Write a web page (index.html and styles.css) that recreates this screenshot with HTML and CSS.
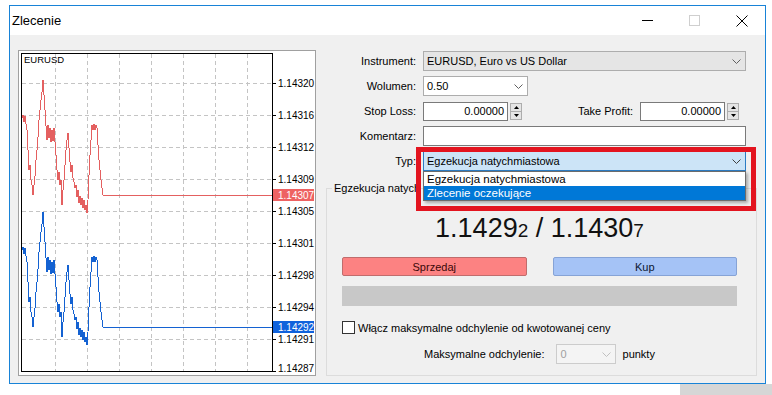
FILE: index.html
```html
<!DOCTYPE html>
<html>
<head>
    <meta charset="utf-8">
    <title>Zlecenie</title>
    <link rel="stylesheet" href="styles.css">
</head>
<body>
    <div class="okno">
        <div class="pasek">
            <span class="tytul">Zlecenie</span>
            <div class="przyciski">
                <span class="ctl"><svg width="11" height="1"><line x1="0" y1="0.5" x2="11" y2="0.5" stroke="#000"/></svg></span>
                <span class="ctl"><svg width="11" height="11"><rect x="0.5" y="0.5" width="10" height="10" fill="none" stroke="#cfcfcf"/></svg></span>
                <span class="ctl"><svg width="12" height="12"><path d="M0.5 0.5 L11.5 11.5 M11.5 0.5 L0.5 11.5" stroke="#000" fill="none"/></svg></span>
            </div>
        </div>

        <div class="klient">
            <div class="wykres">
                <svg width="296" height="324" viewBox="19 51 296 324">
                    <defs>
                        <polyline id="linia" fill="none" points="22,118 23,115 24,122 25,116 26,124 27,130 28,150 29,170 30,165 31,180 32,185 33,195 34,185 35,176 36,160 37,150 38,137 39,120 40,110 41,100 42,92 43,80 44,95 45,110 46,126 47,140 48,125 49,138 50,128 51,142 52,130 53,141 54,128 55,142 56,155 57,170 58,180 59,172 60,185 61,180 62,205 63,190 64,180 65,165 66,150 67,140 68,133 69,148 70,162 71,172 72,165 73,178 74,182 75,188 76,185 77,197 78,190 79,203 80,196 81,205 82,198 83,208 84,200 85,210 86,205 87,213 88,200 89,175 90,155 91,140 92,125 93,130 94,124 95,130 96,125 97,128 98,145 99,160 100,170 101,180 102,188 103,195 273,195"/>
                    </defs>
                    <g stroke="#c4c4c4" stroke-dasharray="4,3" shape-rendering="crispEdges">
                        <line x1="55.5" y1="54" x2="55.5" y2="371"/>
                        <line x1="87.5" y1="54" x2="87.5" y2="371"/>
                        <line x1="119.5" y1="54" x2="119.5" y2="371"/>
                        <line x1="151.5" y1="54" x2="151.5" y2="371"/>
                        <line x1="183.5" y1="54" x2="183.5" y2="371"/>
                        <line x1="215.5" y1="54" x2="215.5" y2="371"/>
                        <line x1="247.5" y1="54" x2="247.5" y2="371"/>
                        <line x1="22" y1="83.5" x2="272" y2="83.5"/>
                        <line x1="22" y1="115.5" x2="272" y2="115.5"/>
                        <line x1="22" y1="147.5" x2="272" y2="147.5"/>
                        <line x1="22" y1="179.5" x2="272" y2="179.5"/>
                        <line x1="22" y1="211.5" x2="272" y2="211.5"/>
                        <line x1="22" y1="243.5" x2="272" y2="243.5"/>
                        <line x1="22" y1="275.5" x2="272" y2="275.5"/>
                        <line x1="22" y1="307.5" x2="272" y2="307.5"/>
                        <line x1="22" y1="339.5" x2="272" y2="339.5"/>
                    </g>
                    <use href="#linia" stroke="#e46060" shape-rendering="crispEdges"/>
                    <use href="#linia" stroke="#1462d2" shape-rendering="crispEdges" transform="translate(0,132)"/>
                    <rect x="21.5" y="53.5" width="251" height="318" fill="none" stroke="#000" shape-rendering="crispEdges"/>
                    <g stroke="#000" shape-rendering="crispEdges">
                        <line x1="273" y1="83.5" x2="276" y2="83.5"/>
                        <line x1="273" y1="115.5" x2="276" y2="115.5"/>
                        <line x1="273" y1="147.5" x2="276" y2="147.5"/>
                        <line x1="273" y1="179.5" x2="276" y2="179.5"/>
                        <line x1="273" y1="211.5" x2="276" y2="211.5"/>
                        <line x1="273" y1="243.5" x2="276" y2="243.5"/>
                        <line x1="273" y1="275.5" x2="276" y2="275.5"/>
                        <line x1="273" y1="307.5" x2="276" y2="307.5"/>
                        <line x1="273" y1="339.5" x2="276" y2="339.5"/>
                        <line x1="273" y1="371.5" x2="276" y2="371.5"/>
                    </g>
                    <g class="skala">
                        <text x="278" y="87">1.14320</text>
                        <text x="278" y="119">1.14316</text>
                        <text x="278" y="151">1.14312</text>
                        <text x="278" y="183">1.14309</text>
                        <text x="278" y="215">1.14305</text>
                        <text x="278" y="247">1.14301</text>
                        <text x="278" y="279">1.14298</text>
                        <text x="278" y="311">1.14294</text>
                        <text x="278" y="343">1.14291</text>
                        <text x="278" y="372">1.14287</text>
                    </g>
                    <rect x="273" y="189" width="41" height="12" fill="#ee6262"/>
                    <text class="skala biala" x="278" y="198.5">1.14307</text>
                    <rect x="273" y="321" width="41" height="12" fill="#0f62dc"/>
                    <text class="skala biala" x="278" y="330.5">1.14292</text>
                    <text class="symbol" x="24" y="63">EURUSD</text>
                </svg>
            </div>

            <div class="zlecenie">
                <div class="formularz">
                    <span class="etykieta">Instrument:</span>
                    <div class="pole combo szare">
                        <span class="wartosc">EURUSD, Euro vs US Dollar</span>
                        <span class="strzalka"><svg width="9" height="5"><polyline points="0.5,0.5 4.5,4.5 8.5,0.5" fill="none" stroke="#606060"/></svg></span>
                    </div>

                    <span class="etykieta">Wolumen:</span>
                    <div class="pole combo waskie">
                        <span class="wartosc">0.50</span>
                        <span class="strzalka"><svg width="9" height="5"><polyline points="0.5,0.5 4.5,4.5 8.5,0.5" fill="none" stroke="#606060"/></svg></span>
                    </div>

                    <span class="etykieta">Stop Loss:</span>
                    <div class="sltp">
                        <div class="liczba">
                            <span class="edycja">0.00000</span>
                            <span class="spin">
                                <span><svg width="5" height="3"><polygon points="0,3 2.5,0 5,3" fill="#000"/></svg></span>
                                <span><svg width="5" height="3"><polygon points="0,0 2.5,3 5,0" fill="#000"/></svg></span>
                            </span>
                        </div>
                        <span class="etykieta-tp">Take Profit:</span>
                        <div class="liczba">
                            <span class="edycja">0.00000</span>
                            <span class="spin">
                                <span><svg width="5" height="3"><polygon points="0,3 2.5,0 5,3" fill="#000"/></svg></span>
                                <span><svg width="5" height="3"><polygon points="0,0 2.5,3 5,0" fill="#000"/></svg></span>
                            </span>
                        </div>
                    </div>

                    <span class="etykieta">Komentarz:</span>
                    <div class="pole"></div>

                    <span class="etykieta">Typ:</span>
                    <div class="pole combo aktywne">
                        <span class="wartosc">Egzekucja natychmiastowa</span>
                        <span class="strzalka"><svg width="9" height="5"><polyline points="0.5,0.5 4.5,4.5 8.5,0.5" fill="none" stroke="#404040"/></svg></span>
                        <ul class="lista">
                            <li>Egzekucja natychmiastowa</li>
                            <li class="wybrane">Zlecenie oczekujące</li>
                        </ul>
                    </div>
                </div>

                <fieldset class="egzekucja">
                    <legend>Egzekucja natychmiastowa</legend>
                    <div class="tresc">
                        <div class="kurs">1.1429<small>2</small> / 1.1430<small>7</small></div>
                        <div class="akcje">
                            <button class="sprzedaj">Sprzedaj</button>
                            <button class="kup">Kup</button>
                        </div>
                        <div class="postep"></div>
                        <label class="opcja"><span class="kwadrat"></span>Włącz maksymalne odchylenie od kwotowanej ceny</label>
                        <div class="odchylenie">
                            <span>Maksymalne odchylenie:</span>
                            <div class="pole combo wylaczone">
                                <span class="wartosc">0</span>
                                <span class="strzalka"><svg width="9" height="5"><polyline points="0.5,0.5 4.5,4.5 8.5,0.5" fill="none" stroke="#c0c0c0"/></svg></span>
                            </div>
                            <span>punkty</span>
                        </div>
                    </div>
                </fieldset>

                <div class="ramka"></div>
            </div>
        </div>
    </div>
    <div class="tlo"></div>
</body>
</html>
```

FILE: styles.css
```css
* {
    box-sizing: border-box;
}

body {
    margin: 0;
    background: #fff;
    font-family: "Liberation Sans", Arial, sans-serif;
    font-size: 11px;
    color: #000;
}

.okno {
    display: flex;
    flex-direction: column;
    width: 757px;
    height: 379px;
    margin: 5px 0 0 9px;
    border: 1px solid #1883d7;
    background: #f0f0f0;
}

.pasek {
    display: flex;
    align-items: center;
    height: 29px;
    background: #fff;
}

.tytul {
    flex: 1;
    padding-left: 2px;
    font-size: 13px;
}

.przyciski {
    display: flex;
    height: 100%;
}

.ctl {
    display: flex;
    align-items: center;
    justify-content: center;
    width: 47px;
}

.ctl svg {
    display: block;
}

.klient {
    flex: 1;
    display: flex;
    padding: 15px 0 0 8px;
}

.wykres {
    width: 298px;
    height: 326px;
    border: 1px solid #a0a0a0;
    background: #fff;
}

.wykres svg {
    display: block;
}

.skala text, text.skala {
    font-family: "Liberation Sans", Arial, sans-serif;
    font-size: 10px;
    fill: #000;
}

text.biala {
    fill: #fff;
}

.symbol {
    font-family: "Liberation Sans", Arial, sans-serif;
    font-size: 9.5px;
}

.zlecenie {
    position: relative;
    width: 431px;
    margin-left: 10px;
    padding-top: 1px;
}

/* wiersze formularza */
.formularz {
    display: grid;
    grid-template-columns: 90px 323px;
    grid-auto-rows: 20px;
    column-gap: 7px;
    row-gap: 5px;
}

.etykieta {
    text-align: right;
    line-height: 20px;
}

.pole {
    position: relative;
    display: flex;
    align-items: center;
    height: 20px;
    border: 1px solid #7a7a7a;
    background: #fff;
}

.combo {
    border-color: #adadad;
}

.wartosc {
    flex: 1;
    padding-left: 3px;
    white-space: nowrap;
    overflow: hidden;
}

.strzalka {
    display: flex;
    align-items: center;
    justify-content: center;
    width: 17px;
}

.strzalka svg {
    display: block;
}

.szare {
    background: #e5e5e5;
}

.waskie {
    width: 105px;
}

.aktywne {
    background: #cce4f7;
    border-color: #2c7cc4;
}

.lista {
    position: absolute;
    top: calc(100% + 1px);
    left: -1px;
    right: -1px;
    z-index: 2;
    margin: 0;
    padding: 0;
    list-style: none;
    background: #fff;
    border: 1px solid #6c6c6c;
    box-shadow: 2px 2px 3px rgba(0, 0, 0, .3);
}

.lista li {
    height: 14px;
    padding-left: 3px;
    line-height: 14px;
    font-size: 11.5px;
}

.lista li.wybrane {
    background: #0078d7;
    color: #fff;
}

.sltp {
    display: flex;
    align-items: center;
}

.liczba {
    display: flex;
    align-items: center;
    gap: 2px;
}

.edycja {
    width: 85px;
    height: 19px;
    padding-right: 3px;
    border: 1px solid #7a7a7a;
    background: #fff;
    text-align: right;
    line-height: 17px;
}

.spin {
    display: flex;
    flex-direction: column;
    width: 12px;
    height: 17px;
    border: 1px solid #adadad;
    background: #e5e5e5;
}

.spin span {
    flex: 1;
    display: flex;
    align-items: center;
    justify-content: center;
}

.spin span + span {
    border-top: 1px solid #adadad;
}

.spin svg {
    display: block;
}

.etykieta-tp {
    width: 118px;
    padding-right: 7px;
    text-align: right;
}

/* grupa egzekucji */
.egzekucja {
    min-width: 0;
    margin: 11px 0 0;
    padding: 18px 0 11px;
    border: 1px solid #dcdcdc;
}

/* reszta podpisu schowana pod ramką i listą */
.egzekucja legend {
    max-width: 85px;
    margin-left: 5px;
    padding: 0 0 0 2px;
    line-height: 13px;
    white-space: nowrap;
    overflow: hidden;
}

.tresc {
    padding: 0 19px 0 15px;
}

.kurs {
    height: 30px;
    line-height: 30px;
    font-size: 27px;
    text-align: center;
    color: #111;
}

.kurs small {
    font-size: 19px;
}

.akcje {
    display: grid;
    grid-template-columns: 1fr 1fr;
    column-gap: 26px;
    margin-top: 14px;
}

.akcje button {
    height: 19px;
    padding: 0;
    border-radius: 2px;
    font: inherit;
}

.sprzedaj {
    background: #fc8282;
    border: 1px solid #c06c6c;
    color: #3a0808;
}

.kup {
    background: #a5c3f6;
    border: 1px solid #86a3d6;
    color: #0c1630;
}

.postep {
    height: 20px;
    margin-top: 10px;
    background: #c8c8c8;
}

.opcja {
    display: flex;
    align-items: center;
    gap: 3px;
    height: 13px;
    margin-top: 15px;
}

.kwadrat {
    width: 13px;
    height: 13px;
    border: 1px solid #333;
    background: #fff;
}

.odchylenie {
    display: flex;
    align-items: center;
    justify-content: center;
    height: 20px;
    margin-top: 10px;
}

.wylaczone {
    width: 60px;
    margin: 0 7px 0 11px;
    border-color: #cccccc;
    background: #f4f4f4;
    color: #a0a0a0;
}

.wylaczone .wartosc {
    padding-left: 4px;
}

/* czerwone zaznaczenie */
.ramka {
    position: absolute;
    left: 90px;
    top: 97px;
    width: 340px;
    height: 64px;
    border: 5px solid #e3141f;
    z-index: 1;
}

.tlo {
    height: 11px;
    margin-left: 680px;
    background: #d6d6d6;
}
```
